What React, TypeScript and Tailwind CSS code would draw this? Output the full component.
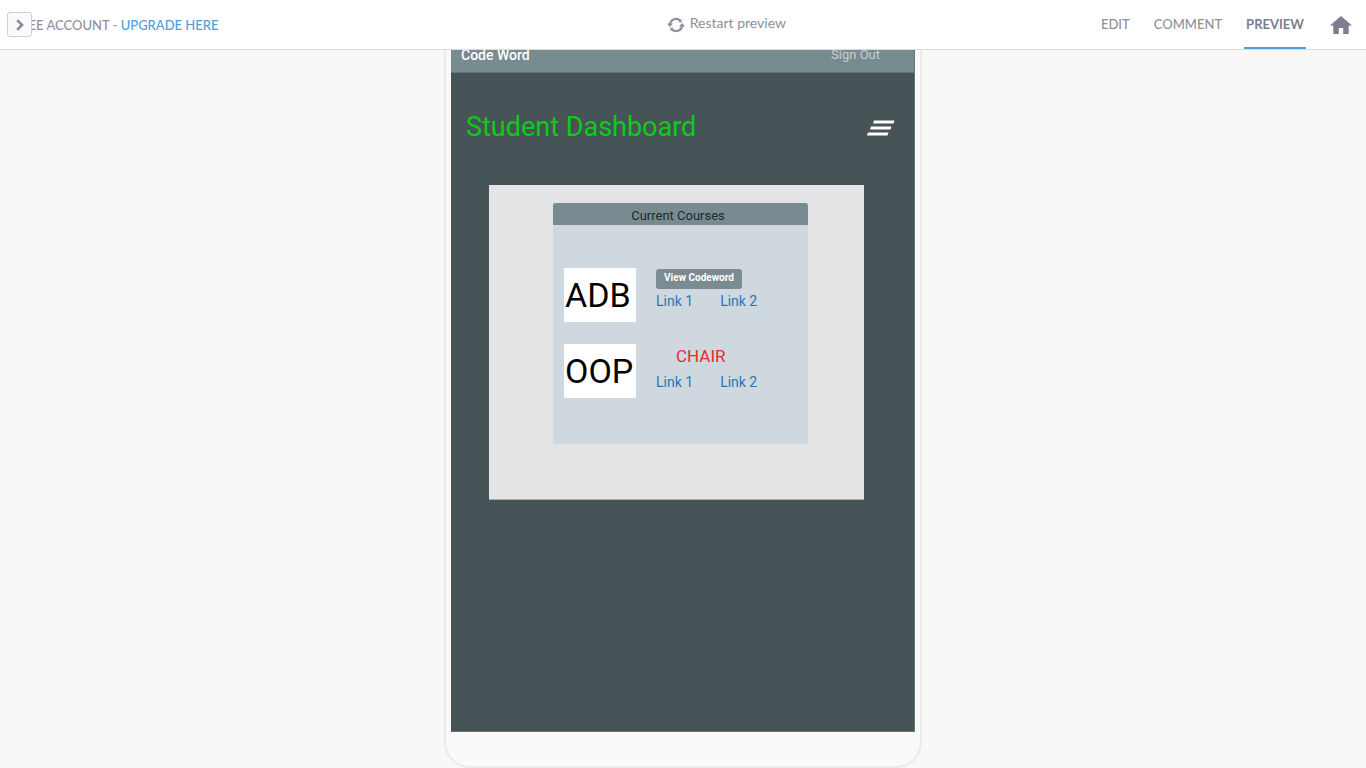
type Course = { code: string; status: "codeword" | "chair" };

const courses: Course[] = [
  { code: "ADB", status: "codeword" },
  { code: "OOP", status: "chair" },
];

function RestartIcon() {
  return (
    <svg width="18" height="16" viewBox="0 0 18 16" fill="none" aria-hidden="true">
      <path d="M3 7.2A6 6 0 0 1 13.2 3.6" stroke="#8f8f9c" strokeWidth="2.2" />
      <path d="M15 8.8A6 6 0 0 1 4.8 12.4" stroke="#8f8f9c" strokeWidth="2.2" />
      <path d="M0 6.4h6L2.8 10z" fill="#8f8f9c" />
      <path d="M18 9.6h-6L15.2 6z" fill="#8f8f9c" />
      <path d="M11.3 5.4l3.6-.2-.5-3.2z" fill="#8f8f9c" />
      <path d="M6.7 10.6l-3.6.2.5 3.2z" fill="#8f8f9c" />
    </svg>
  );
}

function HomeIcon() {
  return (
    <svg width="22" height="18" viewBox="0 0 22 18" aria-hidden="true">
      <path d="M11 0 0 9.4h3.3V18h5.5v-6h4.4v6h5.5V9.4H22z" fill="#7d7d92" />
    </svg>
  );
}

function MenuIcon() {
  return (
    <svg width="28" height="16" viewBox="0 0 28 16" aria-hidden="true">
      <path d="M7 .5h20.5l-1 3H6zM4 6.5h20.5l-1 3H3zM1 12.5h20.5l-1 3H0z" fill="#fff" />
    </svg>
  );
}

function TopBar() {
  return (
    <header className="relative z-10 grid h-[50px] shrink-0 grid-cols-[1fr_auto_1fr] items-center border-b border-[#dcdcdc] bg-white font-['Lato',sans-serif] text-[#8f8f9c]">
      <div className="relative flex items-center pl-[13px]">
        <p className="text-[13px] leading-5 font-medium whitespace-nowrap">
          FREE ACCOUNT -{" "}
          <a href="#upgrade" className="text-[#4f9ddb]">
            UPGRADE HERE
          </a>
        </p>
        <button
          type="button"
          aria-label="Open sidebar"
          className="absolute left-[7px] flex size-[25px] items-center justify-center rounded-[3px] border border-[#cfcfd2] bg-[#f9fafb]"
        >
          <svg width="8" height="12" viewBox="0 0 8 12" fill="none" aria-hidden="true">
            <path d="M1.2 1.2 6 6l-4.800 4.800" stroke="#8a8a92" strokeWidth="2.6" />
          </svg>
        </button>
      </div>
      <div className="flex w-[206px] justify-end">
        <button type="button" className="flex items-center gap-[5px] text-[14px] leading-5 whitespace-nowrap">
          <RestartIcon />
          <span className="pb-[3px]">Restart preview</span>
        </button>
      </div>
      <nav className="flex h-[49px] items-stretch justify-end gap-6 pr-[14px] text-[13px] font-medium">
        <a href="#edit" className="flex items-center">EDIT</a>
        <a href="#comment" className="flex items-center">COMMENT</a>
        <a
          href="#preview"
          className="-ml-[2px] flex items-center border-b-2 border-[#4a9fd8] px-[2px] pt-[2px] font-bold text-[#7d7d92]"
        >
          PREVIEW
        </a>
        <a href="#home" aria-label="Home" className="flex items-center">
          <HomeIcon />
        </a>
      </nav>
    </header>
  );
}

function CourseRow({ course }: { course: Course }) {
  return (
    <li className="flex gap-5">
      <div className="flex h-[54px] w-[72px] items-center bg-white pb-px pl-px text-[34px] leading-none text-black">
        {course.code}
      </div>
      <div className="flex flex-col gap-[2px]">
        {course.status === "codeword" ? (
          <button
            type="button"
            className="mt-px h-5 w-[86px] rounded-[3px] bg-[#7a8c91] pb-[2px] text-[10px] leading-none font-bold text-white"
          >
            View Codeword
          </button>
        ) : (
          <p className="pl-5 text-[17px] leading-6 text-[#e52b2b] pb-[2px]">CHAIR</p>
        )}
        <div className="flex gap-[27px] text-[14px] leading-5 text-[#2a76b8]">
          <a href="#link-1">Link 1</a>
          <a href="#link-2">Link 2</a>
        </div>
      </div>
    </li>
  );
}

function Device() {
  return (
    <div className="-mt-[30px] w-[478px] rounded-[26px] border-2 border-[#ebebeb] bg-[#fafafa] px-[5px] pb-[34px]">
      <div className="flex min-h-[710px] flex-col border-r border-b border-[#657478] bg-[#465357] font-['Roboto',sans-serif]">
        <div className="flex h-[51px] items-center justify-between border-b border-[#657478] bg-[#788b90] pt-4 pr-[34px] pl-[10px] text-[14px] leading-5">
          <span className="font-medium text-white">Code Word</span>
          <a href="#sign-out" className="text-[13px] text-[#c3d0d4]">
            Sign Out
          </a>
        </div>
        <div className="flex items-center justify-between pt-[38px] pr-[19px] pl-[15px]">
          <h1 className="text-[27px] leading-8 text-[#12c91b]">Student Dashboard</h1>
          <button type="button" aria-label="Menu" className="pt-[2px]">
            <MenuIcon />
          </button>
        </div>
        <section className="mt-[42px] mr-[50px] ml-[38px] border-b border-[#a9afb1] bg-[#e4e4e6] pt-[18px] pr-14 pb-[55px] pl-16">
          <div className="bg-[#cfd8de] pb-[46px]">
            <h2 className="h-[22px] rounded-t-[3px] bg-[#788b90] pt-[3px] pr-[5px] text-center text-[13px] leading-5 text-[#20282b]">
              Current Courses
            </h2>
            <ul className="mt-[43px] flex flex-col gap-[22px] pl-[11px]">
              {courses.map((course) => (
                <CourseRow key={course.code} course={course} />
              ))}
            </ul>
          </div>
        </section>
      </div>
    </div>
  );
}

export default function App() {
  return (
    <div className="flex h-screen flex-col overflow-hidden bg-[#f8f8f8]">
      <TopBar />
      <main className="flex flex-1 items-start justify-center overflow-hidden">
        <Device />
      </main>
    </div>
  );
}
